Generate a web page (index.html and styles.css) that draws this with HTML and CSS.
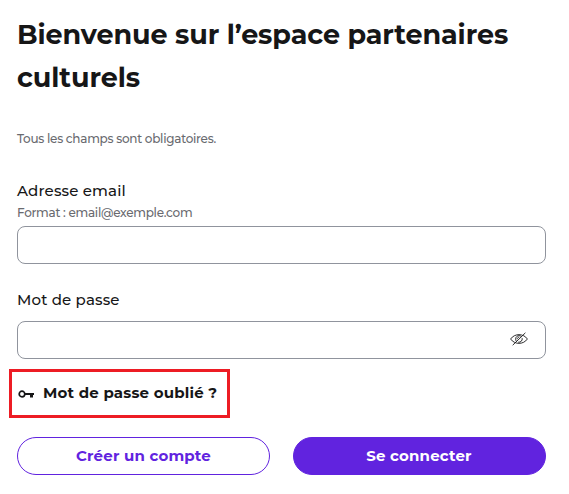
FILE: index.html
```html
<!DOCTYPE html>
<html lang="fr">
<head>
  <meta charset="UTF-8">
  <title>Connexion</title>
  <link rel="stylesheet" href="styles.css">
</head>
<body>
  <main class="login">
    <h1>Bienvenue sur l’espace partenaires culturels</h1>
    <p class="required">Tous les champs sont obligatoires.</p>

    <form>
      <!-- Email -->
      <div class="field">
        <label for="email">Adresse email</label>
        <p class="hint">Format : email@exemple.com</p>
        <input type="email" id="email" class="input">
      </div>

      <!-- Mot de passe -->
      <div class="field password">
        <label for="password">Mot de passe</label>
        <div class="input input-group">
          <input type="password" id="password">
          <button type="button" class="toggle" aria-label="Afficher le mot de passe">
            <svg width="20" height="16" viewBox="0 0 20 16" fill="none" stroke="#161617" stroke-width="0.9">
              <path d="M1.6 8C5.6 2.2 14.4 2.2 18.4 8C14.4 13.8 5.6 13.8 1.6 8Z"/>
              <path d="M7.4 10.4C6 8.6 6.4 4.9 10 4.7C11 4.7 11.8 5 12.4 5.6M13.2 7.2C13.6 9.6 11.6 11.6 9.2 11.2"/>
              <path d="M8.2 8.2C8.2 7 9 6.3 10.2 6.3"/>
              <path d="M3.7 14.2L16.4 1.8"/>
            </svg>
          </button>
        </div>
      </div>

      <a href="#" class="forgot">
        <svg width="17" height="10" viewBox="0 0 17 10">
          <circle cx="4" cy="5" r="2.8" fill="none" stroke="#161617" stroke-width="1.7"/>
          <path d="M6.6 4H16V6H15V8.5H12V6H6.6Z" fill="#161617"/>
        </svg>
        <span>Mot de passe oublié ?</span>
      </a>

      <div class="actions">
        <button type="button" class="btn btn-secondary">Créer un compte</button>
        <button type="submit" class="btn btn-primary">Se connecter</button>
      </div>
    </form>
  </main>
</body>
</html>
```
FILE: styles.css
```css
* {
  box-sizing: border-box;
}

body {
  margin: 0;
  font-family: Montserrat, Inter, sans-serif;
  background-color: #fff;
  color: #161617;
}

.login {
  width: 569px;
  padding: 13px 23px 0 17px;
}

h1 {
  margin: 0;
  font-size: 27px;
  font-weight: 700;
  line-height: 43px;
  letter-spacing: -0.09px;
}

p {
  margin: 0;
}

.required,
.hint {
  font-size: 12px;
  font-weight: 500;
  line-height: 16px;
  letter-spacing: -0.27px;
  color: #696a6f;
}

.required {
  margin-top: 32px;
}

/* Champs */
.field {
  display: flex;
  flex-direction: column;
  margin-top: 34px;
}

.field label {
  font-size: 15px;
  font-weight: 500;
  line-height: 20px;
  letter-spacing: 0.15px;
}

.hint {
  margin-top: 4px;
}

.input {
  width: 528.5px;
  height: 38px;
  margin-top: 5px;
  padding: 0 16px;
  border: 1px solid #90949d;
  border-radius: 8px;
  background-color: #fff;
  font: inherit;
}

.password {
  margin-top: 26px;
}

.input-group {
  display: flex;
  align-items: center;
  margin-top: 10.5px;
}

.input-group input {
  flex: 1;
  border: none;
  outline: none;
  font: inherit;
}

.toggle {
  display: flex;
  padding: 0;
  border: none;
  background: none;
  cursor: pointer;
}

.toggle svg {
  margin-bottom: 2px;
}

/* Mot de passe oublié */
.forgot {
  display: flex;
  align-items: center;
  gap: 8px;
  width: 221px;
  height: 49px;
  margin: 10.5px 0 0 -8px;
  padding: 0 0 2px 6px;
  border: 3px solid #ed1c24;
  color: #161617;
  font-size: 15px;
  font-weight: 700;
  letter-spacing: 0.2px;
  text-decoration: none;
  white-space: nowrap;
}

.forgot svg {
  margin-top: 2px;
}

/* Boutons */
.actions {
  display: flex;
  gap: 22.5px;
  margin-top: 18.5px;
}

.btn {
  width: 253px;
  height: 38.5px;
  border: 1px solid #6123df;
  border-radius: 20px;
  font-family: inherit;
  font-size: 15px;
  font-weight: 700;
  letter-spacing: 0.18px;
  cursor: pointer;
}

.btn-secondary {
  background-color: #fff;
  color: #6123df;
}

.btn-primary {
  background-color: #6123df;
  color: #fff;
}
```
